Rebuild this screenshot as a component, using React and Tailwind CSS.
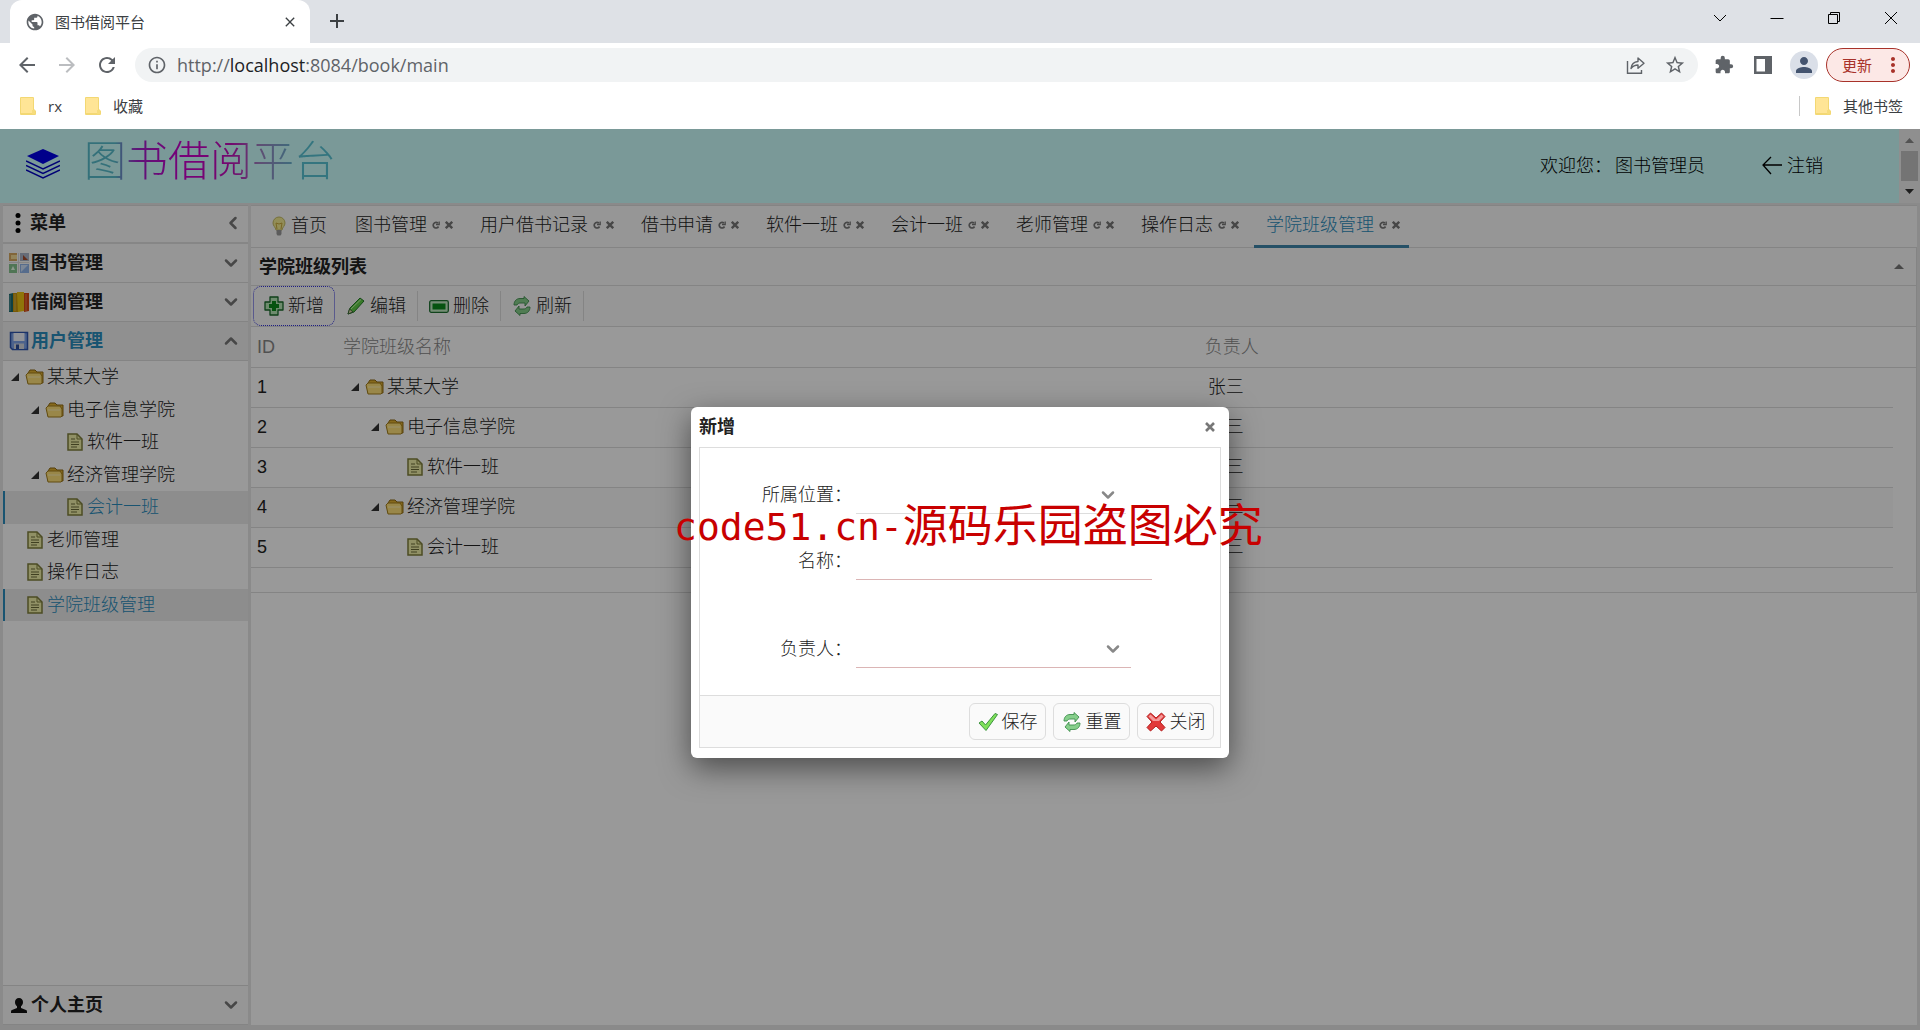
import React, { useState } from 'react';
import {
    MdArrowBack,
    MdArrowForward,
    MdRefresh,
    MdInfoOutline,
    MdStarBorder,
    MdExtension,
    MdPerson,
    MdMoreVert,
    MdPublic,
    MdClose,
    MdAdd,
} from 'react-icons/md';
import { ChevronDown, ChevronUp, ChevronLeft } from 'lucide-react';

const openTabs = ['图书管理', '用户借书记录', '借书申请', '软件一班', '会计一班', '老师管理', '操作日志', '学院班级管理'];

const menuTree = [
    { name: '某某大学', depth: 0, folder: true },
    { name: '电子信息学院', depth: 1, folder: true },
    { name: '软件一班', depth: 2 },
    { name: '经济管理学院', depth: 1, folder: true },
    { name: '会计一班', depth: 2, selected: true },
    { name: '老师管理', depth: 0 },
    { name: '操作日志', depth: 0 },
    { name: '学院班级管理', depth: 0, selected: true },
];

const rows = [
    { id: 1, name: '某某大学', depth: 0, folder: true, owner: '张三' },
    { id: 2, name: '电子信息学院', depth: 1, folder: true, owner: '张三' },
    { id: 3, name: '软件一班', depth: 2, owner: '张三' },
    { id: 4, name: '经济管理学院', depth: 1, folder: true, owner: '张三', striped: true },
    { id: 5, name: '会计一班', depth: 2, owner: '张三' },
];

const App = () => {
    const [activeTab, setActiveTab] = useState('学院班级管理');

    return (
        <div className="h-screen flex flex-col overflow-hidden bg-white font-['Liberation_Sans','Noto_Sans_CJK_SC',sans-serif] text-[18px] leading-6 text-[#222]">
            <BrowserBar />
            <div className="relative flex-1 min-h-0 flex flex-col bg-[#e6e6e6]">
                <PageHeader />
                <div className="flex-1 min-h-0 flex gap-[3px] pl-[3px] pr-[3px] pt-[2px] pb-[5px]">
                    <Sidebar />
                    <main className="flex-1 min-w-0 flex flex-col bg-white">
                        <TabStrip activeTab={activeTab} onSelect={setActiveTab} />
                        <ClassPanel />
                    </main>
                </div>
                <div className="absolute inset-0 bg-black/40 flex items-center justify-center pt-[6px]">
                    <AddDialog />
                </div>
            </div>
        </div>
    );
};

// Browser window
const BrowserBar = () => (
    <div className="shrink-0 font-['Open_Sans','Noto_Sans_CJK_SC',sans-serif] text-[15px] text-[#3c4043]">
        <div className="h-[43px] bg-[#dee1e6] flex items-start pl-[10px]">
            <div className="w-[300px] h-[43px] bg-white rounded-t-xl flex items-center pl-[15px] pr-3">
                <MdPublic className="size-5 text-[#5f6368]" />
                <span className="flex-1 pl-[10px]">图书借阅平台</span>
                <button type="button" aria-label="关闭标签页"><MdClose className="size-4" /></button>
            </div>
            <button type="button" aria-label="新标签页" className="ml-[15px] mt-[9px]"><MdAdd className="size-6" /></button>
            <div className="ml-auto h-9 flex items-center gap-[41px] pr-[21px] text-black">
                <svg className="size-4" viewBox="0 0 16 16" fill="none" stroke="currentColor"><path d="M2 5l6 6 6-6" /></svg>
                <svg className="size-4" viewBox="0 0 16 16" fill="none" stroke="currentColor"><path d="M1.500 8.500h13" /></svg>
                <svg className="size-4" viewBox="0 0 16 16" fill="none" stroke="currentColor"><path d="M2.500 4.500h9v9h-9zM4.500 4V2.500h9v9H12" /></svg>
                <svg className="size-4" viewBox="0 0 16 16" fill="none" stroke="currentColor"><path d="M2 2l12 12M14 2L2 14" /></svg>
            </div>
        </div>
        <div className="h-11 pt-[5px] pl-[15px] pr-[10px] flex text-[#5f6368]">
            <div className="h-[34px] w-[120px] flex items-center gap-4">
                <MdArrowBack className="size-6" />
                <MdArrowForward className="size-6 text-[#bbbdc0]" />
                <MdRefresh className="size-6" />
            </div>
            <div className="h-[34px] flex-1 flex items-center rounded-full bg-[#f1f3f4] pl-3 pr-3">
                <MdInfoOutline className="size-5" />
                <span className="flex-1 pl-[10px] text-[18px]">
                    http://<span className="text-[#202124]">localhost</span>:8084/book/main
                </span>
                <svg className="size-5 mr-[18px]" viewBox="0 0 20 20" fill="none" stroke="currentColor" strokeWidth="1.400">
                    <path d="M1.500 6v12.300h14V15" />
                    <path d="M5 13.500c.5-4.500 3-6.700 7-7V3l6 5.200-6 5V10c-3 0-5 1-7 3.500z" strokeLinejoin="round" />
                </svg>
                <MdStarBorder className="size-[22px]" />
            </div>
            <div className="h-[34px] flex items-center pl-4">
                <MdExtension className="size-5 mr-5" />
                <svg className="size-[18px] mr-[18px]" viewBox="0 0 18 18">
                    <path d="M0 0h18v18H0zM2.500 3v12.500H11V3z" fill="currentColor" fillRule="evenodd" />
                </svg>
                <span className="size-7 mr-2 rounded-full bg-[#dadfe8] flex items-center justify-center text-[#44546f]">
                    <MdPerson className="size-6" />
                </span>
                <button type="button" className="w-[84px] h-[34px] rounded-full border border-[#a8322a] bg-[#fce8e6] text-[#a8322a] flex items-center justify-between pl-[15px] pr-1">
                    更新
                    <MdMoreVert className="size-6" />
                </button>
            </div>
        </div>
        <div className="h-[42px] flex items-center px-5 pb-1">
            <BookmarkFolder />
            <span className="pl-3 w-[49px]">rx</span>
            <BookmarkFolder />
            <span className="pl-3">收藏</span>
            <span className="ml-auto mr-[15px] h-5 w-px bg-[#c8c8c8]"></span>
            <BookmarkFolder />
            <span className="pl-3 -mr-[3px]">其他书签</span>
        </div>
    </div>
);

const BookmarkFolder = () => (
    <svg className="w-4 h-[18px]" viewBox="0 0 16 18">
        <path d="M1 0h12a1 1 0 0 1 1 1v11l2 2v3a1 1 0 0 1-1 1H1a1 1 0 0 1-1-1V1a1 1 0 0 1 1-1z" fill="#f3d873" />
        <path d="M1 1h12v15H1z" fill="#ffe596" />
        <path d="M12 13h3v4h-3z" fill="#f6dc7c" />
    </svg>
);

const PageHeader = () => (
    <header className="h-[74px] shrink-0 flex bg-[#cbfffe]">
        <div className="flex-1 flex items-center pl-[26px]">
            <svg className="w-[34px] h-[30px] mt-[-5px]" viewBox="0 0 34 30" fill="none" stroke="#0303c4" strokeWidth="1.500">
                <path d="M17 0l16 7-16 8L1 7z" fill="#0000e6" stroke="none" />
                <path d="M0 12l17 8 17-8M0 16.500l17 8 17-8M0 21l17 8 17-8" />
            </svg>
            <h1 className="pl-6 pb-2 text-[42px] leading-[52px] font-light text-transparent bg-clip-text bg-[linear-gradient(90deg,#58bccb_0%,#58bccb_20%,#a020c8_28%,#c800c8_45%,#c010b8_62%,#a080c0_72%,#58c4d4_88%)]">
                图书借阅平台
            </h1>
            <div className="ml-auto mr-[76px] flex items-center font-light text-black">
                <span>欢迎您：</span>
                <span className="pl-[3px] pr-14">图书管理员</span>
                <a href="#logout" className="flex items-center gap-1">
                    <svg className="w-[22px] h-5" viewBox="0 0 22 20" fill="none" stroke="currentColor" strokeWidth="1.300">
                        <path d="M21 9H2M10 1L2 9l8 9" />
                    </svg>
                    注销
                </a>
            </div>
        </div>
        <div className="w-[21px] bg-[#efefef] flex flex-col items-center justify-between py-[9px]">
            <svg className="w-[9px] h-[5px]" viewBox="0 0 9 5"><path d="M0 5L4.500 0 9 5z" fill="#8a8a8a" /></svg>
            <div className="w-[17px] h-[30px] bg-[#c1c1c1]"></div>
            <svg className="w-[9px] h-[5px]" viewBox="0 0 9 5"><path d="M0 0h9L4.500 5z" fill="#333" /></svg>
        </div>
    </header>
);

// Left menu
const Sidebar = () => (
    <aside className="w-[245px] shrink-0 flex flex-col bg-white border-t border-[#ddd]">
        <div className="h-[38px] flex items-center pl-[11px] pr-[5px] pb-[2px] border-b-2 border-[#e0e0e0] bg-[#fafafa]">
            <svg className="w-[8px] h-5" viewBox="0 0 8 20"><circle cx="4" cy="2.500" r="2.500" /><circle cx="4" cy="10" r="2.500" /><circle cx="4" cy="17.500" r="2.500" /></svg>
            <span className="pl-2 font-bold">菜单</span>
            <ChevronLeft className="ml-auto size-5 text-[#777]" strokeWidth={3} />
        </div>
        <AccordionHeader icon={<GridIcon />} label="图书管理" />
        <AccordionHeader icon={<BooksIcon />} label="借阅管理" />
        <AccordionHeader icon={<DiskIcon />} label="用户管理" open />
        <nav className="h-[260px] grid auto-rows-fr">
            {menuTree.map((item) => (
                <a
                    key={item.name}
                    href="#menu"
                    className={`flex items-center border-l-2 ${item.selected ? 'bg-[#ebebeb] border-[#2a8cbc] text-[#2a8cbc]' : 'border-transparent'}`}
                >
                    <TreeNode item={item} />
                </a>
            ))}
        </nav>
        <div className="mt-auto border-t border-[#ddd]">
            <AccordionHeader icon={<UserIcon />} label="个人主页" />
        </div>
    </aside>
);

const AccordionHeader = ({ icon, label, open }) => (
    <button
        type="button"
        aria-expanded={!!open}
        className={`w-full h-[39px] shrink-0 flex items-center pl-[6px] pr-[7px] border-b border-[#ddd] font-bold ${open ? 'bg-[#f0f0f0] text-[#2a8cbc]' : 'bg-[#fafafa]'}`}
    >
        {icon}
        <span className="pl-[2px]">{label}</span>
        {open
            ? <ChevronUp className="ml-auto size-5 text-[#777]" strokeWidth={3} />
            : <ChevronDown className="ml-auto size-5 text-[#777]" strokeWidth={3} />}
    </button>
);

const TreeNode = ({ item }) => (
    <span className="flex items-center font-light">
        <span className="h-5 shrink-0" style={{ width: item.depth * 20 }}></span>
        <span className="w-[20px] flex justify-center">
            {item.folder && (
                <svg className="size-2" viewBox="0 0 8 8"><path d="M8 0v8H0z" fill="#333" /></svg>
            )}
        </span>
        {item.folder ? <FolderIcon /> : <FileIcon />}
        <span className="pl-[2px]">{item.name}</span>
    </span>
);

// Tabs
const TabStrip = ({ activeTab, onSelect }) => (
    <div className="h-[43px] shrink-0 flex gap-[6px] pl-2 border-t border-b border-[#ddd] bg-[#fafafa] font-light">
        <button type="button" className="h-[39px] flex items-center pl-3 pr-[10px]">
            <BulbIcon />
            <span className="pl-1">首页</span>
        </button>
        {openTabs.map((tab) => (
            <div
                key={tab}
                className={`h-[42px] flex items-center pl-3 pr-[9px] pb-[1px] border-b-[3px] ${tab === activeTab ? 'border-[#3f86aa] text-[#2a8cbc]' : 'border-transparent'}`}
            >
                <button type="button" onClick={() => onSelect(tab)}>{tab}</button>
                <button type="button" aria-label="刷新" className="pl-[5px]">
                    <svg className="size-2" viewBox="0 0 8 8" fill="none" stroke="#777" strokeWidth="1.700">
                        <path d="M6 2.200A2.800 2.800 0 1 0 6.500 5.500" /><path d="M4 3.500h3.200V.5" strokeWidth="1.300" />
                    </svg>
                </button>
                <button type="button" aria-label="关闭" className="pl-[5px]">
                    <CrossIcon />
                </button>
            </div>
        ))}
    </div>
);

const CrossIcon = () => (
    <svg className="size-2" viewBox="0 0 8 8" fill="none" stroke="#777" strokeWidth="2.400">
        <path d="M.8.8l6.400 6.400M7.200.8L.8 7.200" />
    </svg>
);

// Class list
const ClassPanel = () => (
    <section className="border-b border-r border-[#ddd]">
        <div className="h-[38px] flex items-center justify-between pl-2 pr-3 border-b border-[#ddd] bg-[#fafafa]">
            <h2 className="font-bold">学院班级列表</h2>
            <svg className="w-[10px] h-[5px]" viewBox="0 0 10 5"><path d="M0 5l5-5 5 5z" fill="#777" /></svg>
        </div>
        <div className="h-[41px] flex items-center pl-[2px] border-b border-[#ddd] bg-[#fafafa] font-light">
            <button type="button" className="w-[82px] h-10 flex items-center justify-center gap-1 rounded-lg border border-dotted border-[#3333dd]">
                <AddIcon />新增
            </button>
            <ToolButton icon={<PencilIcon />} label="编辑" />
            <ToolButton icon={<MinusIcon />} label="删除" />
            <ToolButton icon={<ReloadIcon />} label="刷新" />
        </div>
        <table className="w-full table-fixed border-collapse text-left mb-6">
            <colgroup>
                <col className="w-[86px]" />
                <col className="w-[52%]" />
                <col />
                <col className="w-[23px]" />
            </colgroup>
            <thead>
                <tr className="h-10 border-b border-[#ddd] text-[#888]">
                    <th className="pl-[6px] font-light">ID</th>
                    <th className="pl-[6px] font-light">学院班级名称</th>
                    <th className="pl-[2px] font-light">负责人</th>
                    <th></th>
                </tr>
            </thead>
            <tbody>
                {rows.map((row) => (
                    <tr key={row.id} className="h-10 font-light">
                        <td className={`pl-[6px] border-b border-[#ddd] ${row.striped ? 'bg-[#fafafa]' : ''}`}>{row.id}</td>
                        <td className={`pl-2 border-b border-[#ddd] ${row.striped ? 'bg-[#fafafa]' : ''}`}><TreeNode item={row} /></td>
                        <td className={`pl-[5px] border-b border-[#ddd] ${row.striped ? 'bg-[#fafafa]' : ''}`}>{row.owner}</td>
                        <td></td>
                    </tr>
                ))}
            </tbody>
        </table>
    </section>
);

const ToolButton = ({ icon, label }) => (
    <button type="button" className="w-[83px] h-[30px] flex items-center justify-center gap-1 border-r border-[#ddd]">
        {icon}{label}
    </button>
);

// Add dialog
const AddDialog = () => (
    <div role="dialog" aria-labelledby="dialog-title" className="relative w-[538px] bg-white rounded-md px-2 pb-[10px] shadow-[0_10px_30px_rgba(0,0,0,0.5)]">
        <div className="h-10 flex items-center justify-between pr-[6px]">
            <h2 id="dialog-title" className="font-bold">新增</h2>
            <button type="button" aria-label="关闭">
                <svg className="size-[10px]" viewBox="0 0 10 10" fill="none" stroke="#777" strokeWidth="2.600"><path d="M1 1l8 8M9 1L1 9" /></svg>
            </button>
        </div>
        <form className="border border-[#ddd] font-light" onSubmit={(e) => e.preventDefault()}>
            <div className="h-[247px] pt-[29px]">
                <div className="h-[66px] flex items-start">
                    <FormLabel id="place">所属位置：</FormLabel>
                    <SelectBox id="place" width="w-[270px]" border="border-[#ddd]" />
                </div>
                <div className="h-[88px] flex items-start">
                    <FormLabel id="name">名称：</FormLabel>
                    <input id="name" type="text" className="w-[296px] h-[37px] border-b border-[#dbb5b5] outline-none" />
                </div>
                <div className="flex items-start">
                    <FormLabel id="owner">负责人：</FormLabel>
                    <SelectBox id="owner" width="w-[275px]" border="border-[#dbb5b5]" />
                </div>
            </div>
            <div className="h-[52px] flex items-center justify-end gap-[7px] pr-[6px] border-t border-[#ddd] bg-[#fafafa]">
                <DialogButton type="submit" icon={<CheckIcon />} label="保存" />
                <DialogButton type="reset" icon={<ReloadIcon />} label="重置" />
                <DialogButton type="button" icon={<CancelIcon />} label="关闭" />
            </div>
        </form>
        <div className="absolute top-[92px] left-[-17px] flex items-center whitespace-nowrap pointer-events-none leading-[56px] text-[#c80000]">
            <span className="font-['DejaVu_Sans_Mono',monospace] text-[38px]">code51.cn-</span>
            <span className="text-[45px]">源码乐园盗图必究</span>
        </div>
    </div>
);

const FormLabel = ({ id, children }) => (
    <label htmlFor={id} className="w-[152px] mr-1 py-[6px] text-right">{children}</label>
);

const SelectBox = ({ id, width, border }) => (
    <div className={`relative h-[37px] border-b ${width} ${border}`}>
        <select id={id} className="appearance-none w-full h-full outline-none">
            <option value=""></option>
        </select>
        <ChevronDown className="absolute right-2 top-2 size-5 text-[#888] pointer-events-none" strokeWidth={3} />
    </div>
);

const DialogButton = ({ type, icon, label }) => (
    <button type={type} className="w-[77px] h-[37px] flex items-center justify-center gap-1 rounded-md border border-[#ddd] bg-[#fafafa]">
        {icon}{label}
    </button>
);

// Icons
const FolderIcon = () => (
    <svg className="w-5 h-5 shrink-0" viewBox="0 0 20 20">
        <path d="M3 16V6l2-3h5l2 2h6v11z" fill="#e0b030" stroke="#8d6a15" />
        <path d="M1 8l2-2h12l2 3v7l-1 1H3z" fill="#ffe27a" stroke="#a37e1c" />
        <path d="M3 10h12" stroke="#fff2b8" />
    </svg>
);

const FileIcon = () => (
    <svg className="w-5 h-5 shrink-0" viewBox="0 0 20 20">
        <path d="M3 2h9l5 5v11H3z" fill="#f0f0a8" stroke="#7f7f3c" strokeWidth="1.500" />
        <path d="M12 2v5h5" fill="none" stroke="#7f7f3c" />
        <path d="M6 7h4M6 10h8M6 12.500h8M6 15h6" stroke="#6c6c38" />
    </svg>
);

const BulbIcon = () => (
    <svg className="w-4 h-5" viewBox="0 0 16 20">
        <path d="M8 1a6 6 0 0 1 6 6c0 3-2.500 4-3 7H5c-.5-3-3-4-3-7a6 6 0 0 1 6-6z" fill="#f3ec92" stroke="#c4bb62" />
        <path d="M6 13L5 7l3 1 3-1-1 6" fill="none" stroke="#c9a83c" />
        <path d="M5.500 14h5v4l-1 1.500h-3l-1-1.500z" fill="#999" />
    </svg>
);

const GridIcon = () => (
    <svg className="size-5" viewBox="0 0 20 20">
        <path d="M0 0h8v8H0z" fill="#d8a860" /><path d="M2 2h6v4H2z" fill="#f6dc96" />
        <path d="M11 0h9v8h-9z" fill="#aab4c8" /><path d="M14 2l5 5h-5z" fill="#a34a2c" />
        <path d="M0 11h8v9H0z" fill="#86c48e" /><path d="M2 17l2-4 2 4z" fill="#e9ffe9" />
        <path d="M11 11h9v9h-9z" fill="#8fb5ea" /><path d="M12 12h7l-7 7z" fill="#cfe1fb" />
        <path d="M9.500 0v20M0 9.500h20" stroke="#ddd" />
    </svg>
);

const BooksIcon = () => (
    <svg className="size-5" viewBox="0 0 20 20">
        <path d="M0 2l4-1v19H0z" fill="#1a6b70" />
        <path d="M4 1h5v19H4z" fill="#c9960c" />
        <path d="M8 0h7v19l-6 1z" fill="#eec411" />
        <path d="M15 1h5v18l-5 1z" fill="#d8480f" />
        <path d="M1 3v16M6 2v17M17 2v17" stroke="#fff" strokeOpacity="0.300" />
    </svg>
);

const DiskIcon = () => (
    <svg className="size-5" viewBox="0 0 20 20">
        <path d="M1.500 1.500h17v17h-15l-2-2z" fill="#7fa3ea" stroke="#2f55ae" strokeWidth="1.500" />
        <path d="M4.500 2h11v8h-11z" fill="#f2f5fd" />
        <path d="M5 12.500h10V18H5z" fill="#d5d9e2" />
        <path d="M7 13.500h3V18H7z" fill="#2c4d9b" />
    </svg>
);

const UserIcon = () => (
    <svg className="size-5" viewBox="0 0 20 20" fill="#111">
        <path d="M10 3c2.500 0 4 1.700 4 4 0 2-.8 3.500-2 4.300V13l5 2c1 .4 1 1 1 3H2c0-2 0-2.600 1-3l5-2v-1.700C6.800 10.500 6 9 6 7c0-2.300 1.500-4 4-4z" />
    </svg>
);

const AddIcon = () => (
    <svg className="size-5" viewBox="0 0 20 20">
        <path d="M6 1h8v5h5v8h-5v5H6v-5H1V6h5z" fill="#b8e8b8" stroke="#186a2a" strokeWidth="1.300" strokeLinejoin="round" />
        <path d="M8 5h4v3h3v4h-3v3H8v-3H5V8h3z" fill="#0c8a1c" />
    </svg>
);

const PencilIcon = () => (
    <svg className="size-5" viewBox="0 0 20 20">
        <path d="M2 18l2-6L14 2l4 3L8 16z" fill="#5ecb45" stroke="#237a28" strokeLinejoin="round" />
        <path d="M5 13L15 3.500" stroke="#c0f5a8" />
        <path d="M2 18l1.500-5L7 16z" fill="#e4dcae" stroke="#3c6838" />
    </svg>
);

const MinusIcon = () => (
    <svg className="size-5" viewBox="0 0 20 20">
        <rect x="0.700" y="4.700" width="18.600" height="11.600" rx="1.500" fill="#c4ecc4" stroke="#1d7030" strokeWidth="1.300" />
        <path d="M3.500 7.500h13v6h-13z" fill="#0b8a1c" />
    </svg>
);

const ReloadIcon = () => (
    <svg className="size-5" viewBox="0 0 20 20" fill="#86cf8b" stroke="#3f8f4e" strokeWidth="0.900" strokeLinejoin="round">
        <path d="M2 9c0-4 2.500-6.500 6-6.500h4V.5L17 5l-4 5V7H9C7 7 5.500 7.500 5 9z" />
        <path d="M18 11c0 4-2.500 6.500-6 6.500H8v2L3 15l4-5v3h4c2 0 3.500-.5 4-2z" />
    </svg>
);

const CheckIcon = () => (
    <svg className="size-5" viewBox="0 0 20 20">
        <path d="M1 11l3-2 3.500 4L17 1.500l2.500 1L8 18.500z" fill="#7fe05a" stroke="#3d9440" strokeLinejoin="round" />
    </svg>
);

const CancelIcon = () => (
    <svg className="size-5" viewBox="0 0 20 20">
        <path d="M4.500 1L10 6l5.500-5L19 4.500 14 10l5 5.500-3.500 3.500L10 14l-5.500 5L1 15.500 6 10 1 4.500z" fill="#e23a3a" stroke="#b31f1f" strokeLinejoin="round" />
        <path d="M4.500 2.500L10 7.500l5.500-5L17.500 4.500 13 9H7L2.500 4.500z" fill="#f59a9a" />
    </svg>
);

export default App;
